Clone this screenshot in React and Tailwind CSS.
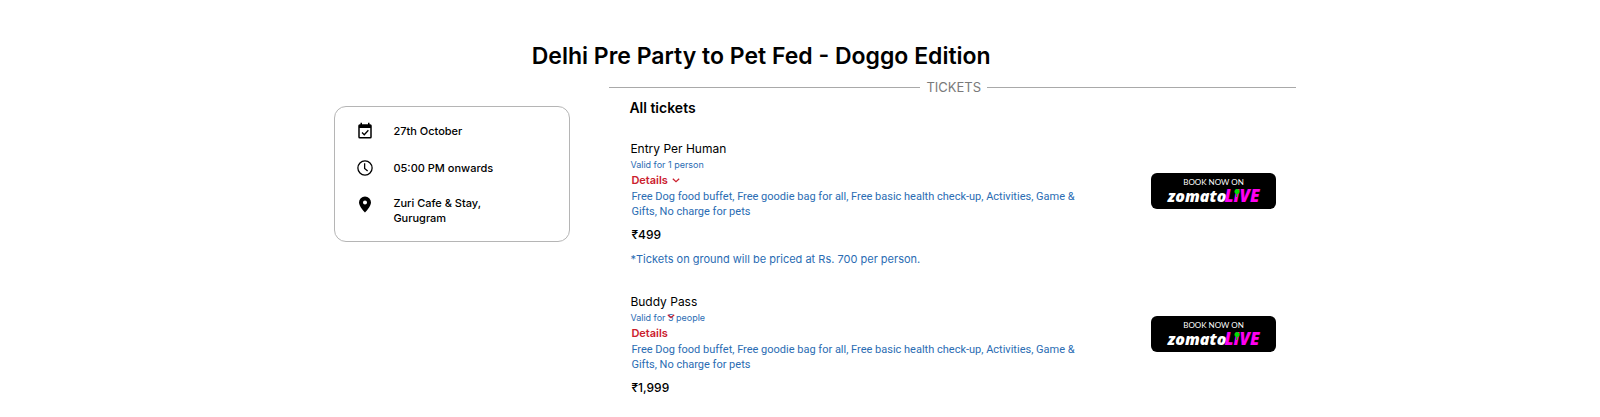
import React from "react";

const perks =
  "Free Dog food buffet, Free goodie bag for all, Free basic health check-up, Activities, Game & Gifts, No charge for pets";

function CalendarIcon() {
  return (
    <svg viewBox="0 0 24 24" className="size-[18px]" aria-hidden="true">
      <path
        fill="currentColor"
        d="M19 3h-1V1h-2v2H8V1H6v2H5a2 2 0 0 0-2 2v15a2 2 0 0 0 2 2h14a2 2 0 0 0 2-2V5a2 2 0 0 0-2-2Zm0 17H5V8h14v12Z"
      />
      <path fill="none" stroke="currentColor" strokeWidth="1.7" d="m8 14 3 3 5.500-6" />
    </svg>
  );
}

function ClockIcon() {
  return (
    <svg viewBox="0 0 24 24" className="size-[18px]" fill="none" stroke="currentColor" strokeWidth="1.7" aria-hidden="true">
      <circle cx="12" cy="12" r="9.500" />
      <path d="M11.500 5.500V12.500l4 3.500" />
    </svg>
  );
}

function PinIcon() {
  return (
    <svg viewBox="0 0 24 24" className="size-[18px]" aria-hidden="true">
      <path
        fill="currentColor"
        fillRule="evenodd"
        d="M12 .5a8 8 0 0 0-8 8c0 5.500 8 13.500 8 13.500s8-8 8-13.500a8 8 0 0 0-8-8Zm0 5.500a2.700 2.700 0 1 1 0 5.400A2.700 2.700 0 0 1 12 6Z"
      />
    </svg>
  );
}

function Chevron() {
  return (
    <svg viewBox="0 0 8 5" className="h-[5px] w-2" fill="none" stroke="#cb202d" strokeWidth="1.2" aria-hidden="true">
      <path d="m.8.8 3.200 3L7.200.8" />
    </svg>
  );
}

function BookLink() {
  return (
    <a
      href="#book"
      className="flex h-9 w-[125px] flex-col items-center rounded-md bg-black pt-1 text-white"
    >
      <span className="font-[Lato,sans-serif] text-[8px] leading-[10px]">BOOK NOW ON</span>
      <span className="flex items-center font-['Open_Sans',sans-serif] text-base leading-[18px] font-extrabold italic">
        zomato
        <span className="relative -ml-0.5 text-[17px] text-[#ff00f0]">
          LIVE
          <svg viewBox="0 0 6 12" className="absolute top-0.5 left-[9px] h-3 w-1.5" aria-hidden="true">
            <path d="M3 4 2.500 8" stroke="#00d000" strokeWidth="1.2" />
            <circle cx="3" cy="2.500" r="2.500" fill="#00e000" />
          </svg>
        </span>
      </span>
    </a>
  );
}

function Ticket({ name, validity, price, note, detailsChevron }) {
  return (
    <article className="flex items-start justify-between">
      <div className="max-w-[470px] pl-px">
        <h3 className="text-xs leading-[17px]">{name}</h3>
        <p className="text-[9px] leading-[15px] text-[#2a6cb3]">{validity}</p>
        <button type="button" className="flex items-center gap-1 pl-px text-[11px] leading-[17px] font-semibold text-[#cb202d]">
          Details
          {detailsChevron && <Chevron />}
        </button>
        <p className="pl-px font-[Roboto,sans-serif] text-[11px] leading-[15px] text-[#2a6cb3]">{perks}</p>
        <p className="mt-2 pl-px text-xs leading-4 font-medium">{price}</p>
        {note && <p className="mt-2 text-[11px] leading-4 text-[#2a6cb3]">{note}</p>}
      </div>
      <div className={note ? "pt-[33px]" : "pt-[23px]"}>
        <BookLink />
      </div>
    </article>
  );
}

export default function App() {
  return (
    <main className="bg-white pr-[19%] pl-[20.9%] font-[Inter,sans-serif] text-black">
      <h1 className="pt-10 pr-[108px] text-center text-[23px] leading-8 font-semibold">
        Delhi Pre Party to Pet Fed - Doggo Edition
      </h1>
      <div className="mt-1.5 flex items-start gap-[39px]">
        <aside className="mt-7 w-[236px] shrink-0 rounded-xl border border-[#b5b5b5] px-[21px] pt-[15px] pb-[15px]">
          <ul className="flex flex-col gap-[19px] text-[11px] leading-[15px] font-medium">
            <li className="flex items-center gap-[19px]">
              <CalendarIcon />
              27th October
            </li>
            <li className="flex items-center gap-[19px]">
              <ClockIcon />
              05:00 PM onwards
            </li>
            <li className="flex items-start gap-[19px]">
              <PinIcon />
              <span>
                Zuri Cafe &amp; Stay,
                <br />
                Gurugram
              </span>
            </li>
          </ul>
        </aside>
        <section className="min-w-0 grow">
          <div className="flex items-center gap-1.5 text-[13px] leading-[18px] text-[#7a7a7a]">
            <span className="h-px w-[311px] bg-[#a9a9a9]" />
            TICKETS
            <span className="h-px grow bg-[#a9a9a9]" />
          </div>
          <div className="px-5">
            <h2 className="mt-0.5 text-sm leading-5 font-semibold">All tickets</h2>
            <div className="mt-[22px] flex flex-col gap-[26px]">
              <Ticket
                name="Entry Per Human"
                validity="Valid for 1 person"
                price="₹499"
                note="*Tickets on ground will be priced at Rs. 700 per person."
                detailsChevron
              />
              <Ticket
                name="Buddy Pass"
                validity={
                  <>
                    Valid for{" "}
                    <span className="relative">
                      5
                      <span className="absolute top-0.5 -left-px flex">
                        <Chevron />
                      </span>
                    </span>{" "}
                    people
                  </>
                }
                price="₹1,999"
              />
            </div>
          </div>
        </section>
      </div>
    </main>
  );
}
